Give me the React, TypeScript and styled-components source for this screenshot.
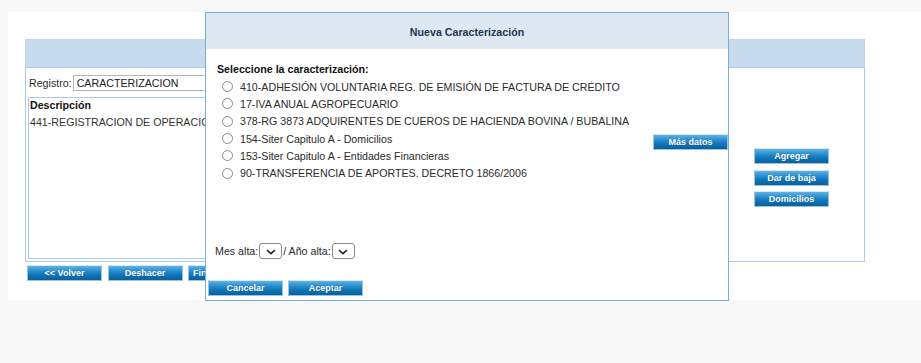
import React from 'react'
import styled, { createGlobalStyle } from 'styled-components'

const GlobalStyle = createGlobalStyle`
    html, body {
        margin: 0;
        padding: 0;
        background: #f8f8f8;
    }

    body {
        font-family: "Liberation Sans", Arial, sans-serif;
        font-size: 10.67px;
        color: #2b2b2b;
    }
`

const opciones = [
    '410-ADHESIÓN VOLUNTARIA REG. DE EMISIÓN DE FACTURA DE CRÉDITO',
    '17-IVA ANUAL AGROPECUARIO',
    '378-RG 3873 ADQUIRENTES DE CUEROS DE HACIENDA BOVINA / BUBALINA',
    '154-Siter Capitulo A - Domicilios',
    '153-Siter Capitulo A - Entidades Financieras',
    '90-TRANSFERENCIA DE APORTES. DECRETO 1866/2006'
]

const Chevron = () => (
    <svg width="10" height="6" viewBox="0 0 10 6">
        <path d="M1 1l4 3.6L9 1" fill="none" stroke="#222" strokeWidth="1.6" />
    </svg>
)

const App: React.FC = () => {
    return (
        <PageStyled>
            <GlobalStyle />
            <SheetStyled>
                <PanelStyled>
                    <PanelHeader />
                    <PanelBody>
                        <LeftColumn>
                            <RegistroRow>
                                <span>Registro:</span>
                                <InputStyled>CARACTERIZACION</InputStyled>
                            </RegistroRow>
                            <TableBox>
                                <TableHead>Descripción</TableHead>
                                <TableRow>441-REGISTRACION DE OPERACIONES</TableRow>
                            </TableBox>
                        </LeftColumn>
                        <SideButtons>
                            <BlueButton>Agregar</BlueButton>
                            <BlueButton>Dar de baja</BlueButton>
                            <BlueButton>Domicilios</BlueButton>
                        </SideButtons>
                    </PanelBody>
                </PanelStyled>
                <BottomButtons>
                    <BlueButton>&lt;&lt; Volver</BlueButton>
                    <BlueButton>Deshacer</BlueButton>
                    <BlueButton $wide>Finalizar presentación</BlueButton>
                </BottomButtons>
            </SheetStyled>

            <ModalStyled>
                <ModalHeader>Nueva Caracterización</ModalHeader>
                <ModalBody>
                    <ModalLabel>Seleccione la caracterización:</ModalLabel>
                    <OptionsArea>
                        <OptionList>
                            {opciones.map((texto) => (
                                <OptionRow key={texto}>
                                    <RadioCircle />
                                    <span>{texto}</span>
                                </OptionRow>
                            ))}
                        </OptionList>
                        <MoreButton>Más datos</MoreButton>
                    </OptionsArea>
                    <DateRow>
                        <span>Mes alta:</span>
                        <SelectBox><Chevron /></SelectBox>
                        <span>/ Año alta:</span>
                        <SelectBox><Chevron /></SelectBox>
                    </DateRow>
                    <ModalFooter>
                        <BlueButton>Cancelar</BlueButton>
                        <BlueButton>Aceptar</BlueButton>
                    </ModalFooter>
                </ModalBody>
            </ModalStyled>
        </PageStyled>
    )
}

const PageStyled = styled.div`
    position: relative;
    padding: 12px 0 0 8px;
    height: 363px;
    box-sizing: border-box;
    overflow: hidden;
`

const SheetStyled = styled.div`
    width: 913px;
    height: 288px;
    background: #fff;
    padding: 27px 0 0 17px;
    box-sizing: border-box;
`

const PanelStyled = styled.div`
    width: 840px;
`

const PanelHeader = styled.div`
    height: 28px;
    background: #c8daee;
    border: 1px solid #c0d4ea;
    border-bottom: none;
    box-sizing: border-box;
`

const PanelBody = styled.div`
    display: grid;
    grid-template-columns: 728px 1fr;
    height: 195px;
    border: 1px solid #a8c9f3;
    box-sizing: border-box;
`

const LeftColumn = styled.div`
    display: flex;
    flex-direction: column;
    padding: 7px 0 2px 2px;
`

const RegistroRow = styled.div`
    display: flex;
    align-items: center;
    gap: 1px;
    height: 16px;
    padding-left: 1px;
`

const InputStyled = styled.div`
    width: 300px;
    height: 16px;
    box-sizing: border-box;
    border: 1px solid #b5b5b5;
    padding: 1px 3px;
    line-height: 13px;
    font-size: 10.67px;
    color: #222;
`

const TableBox = styled.div`
    flex: 1;
    margin-top: 6px;
    width: 690px;
    border: 1px solid #a8c9f3;
    border-right: none;
`

const TableHead = styled.div`
    height: 14px;
    line-height: 14px;
    font-weight: bold;
    color: #111;
    padding-left: 1px;
`

const TableRow = styled.div`
    height: 18px;
    line-height: 20px;
    padding-left: 1px;
    color: #333;
`

const SideButtons = styled.div`
    display: flex;
    flex-direction: column;
    gap: 5.5px;
    padding-top: 80px;
`

const BlueButton = styled.button<{ $wide?: boolean }>`
    width: ${(props) => (props.$wide ? 'auto' : '75px')};
    height: 16px;
    padding: 0 ${(props) => (props.$wide ? '4px' : '0')};
    box-sizing: border-box;
    border: 1px solid #9cc4e2;
    border-top-color: #d8e9f6;
    background: linear-gradient(#61b2e3 0%, #2a8fd0 35%, #0f74b6 65%, #0a609a 100%);
    color: #fff;
    font-family: "Liberation Sans", Arial, sans-serif;
    font-weight: bold;
    font-size: 9px;
    line-height: 14px;
    text-align: center;
    white-space: nowrap;
    text-shadow: 0 0 1px rgba(0, 40, 80, 0.4);
    cursor: pointer;
`

const BottomButtons = styled.div`
    display: flex;
    gap: 5.5px;
    margin: 3px 0 0 2px;
`

const ModalStyled = styled.div`
    position: absolute;
    left: 205px;
    top: 12px;
    width: 524px;
    height: 289px;
    box-sizing: border-box;
    background: #fff;
    border: 1px solid #78afd8;
    display: flex;
    flex-direction: column;
`

const ModalHeader = styled.div`
    height: 36px;
    background: #dee8f3;
    display: flex;
    align-items: center;
    justify-content: center;
    padding-top: 1px;
    box-sizing: border-box;
    font-weight: bold;
    color: #22364e;
`

const ModalBody = styled.div`
    display: flex;
    flex-direction: column;
    padding-top: 12px;
`

const ModalLabel = styled.div`
    height: 17px;
    line-height: 17px;
    padding-left: 11px;
    font-weight: bold;
    color: #111;
`

const OptionsArea = styled.div`
    display: flex;
    justify-content: space-between;
    height: 104px;
`

const OptionList = styled.div`
    display: flex;
    flex-direction: column;
    padding-left: 16px;
`

const OptionRow = styled.div`
    display: flex;
    align-items: center;
    gap: 7px;
    height: 17.3px;
    color: #2b2b2b;
`

const RadioCircle = styled.span`
    width: 9px;
    height: 9px;
    border: 1px solid #8c8c8c;
    border-radius: 50%;
    background: #fff;
`

const MoreButton = styled(BlueButton)`
    margin-top: 56px;
`

const DateRow = styled.div`
    display: flex;
    align-items: center;
    gap: 1px;
    height: 16px;
    margin-top: 61px;
    padding-left: 9px;
    color: #2b2b2b;
`

const SelectBox = styled.div`
    width: 23px;
    height: 16px;
    box-sizing: border-box;
    border: 1px solid #8a8a8a;
    border-radius: 3px;
    display: flex;
    align-items: center;
    justify-content: center;
    padding-top: 1px;
`

const ModalFooter = styled.div`
    display: flex;
    gap: 5px;
    margin-top: 21px;
    padding-left: 2px;
`

export default App
